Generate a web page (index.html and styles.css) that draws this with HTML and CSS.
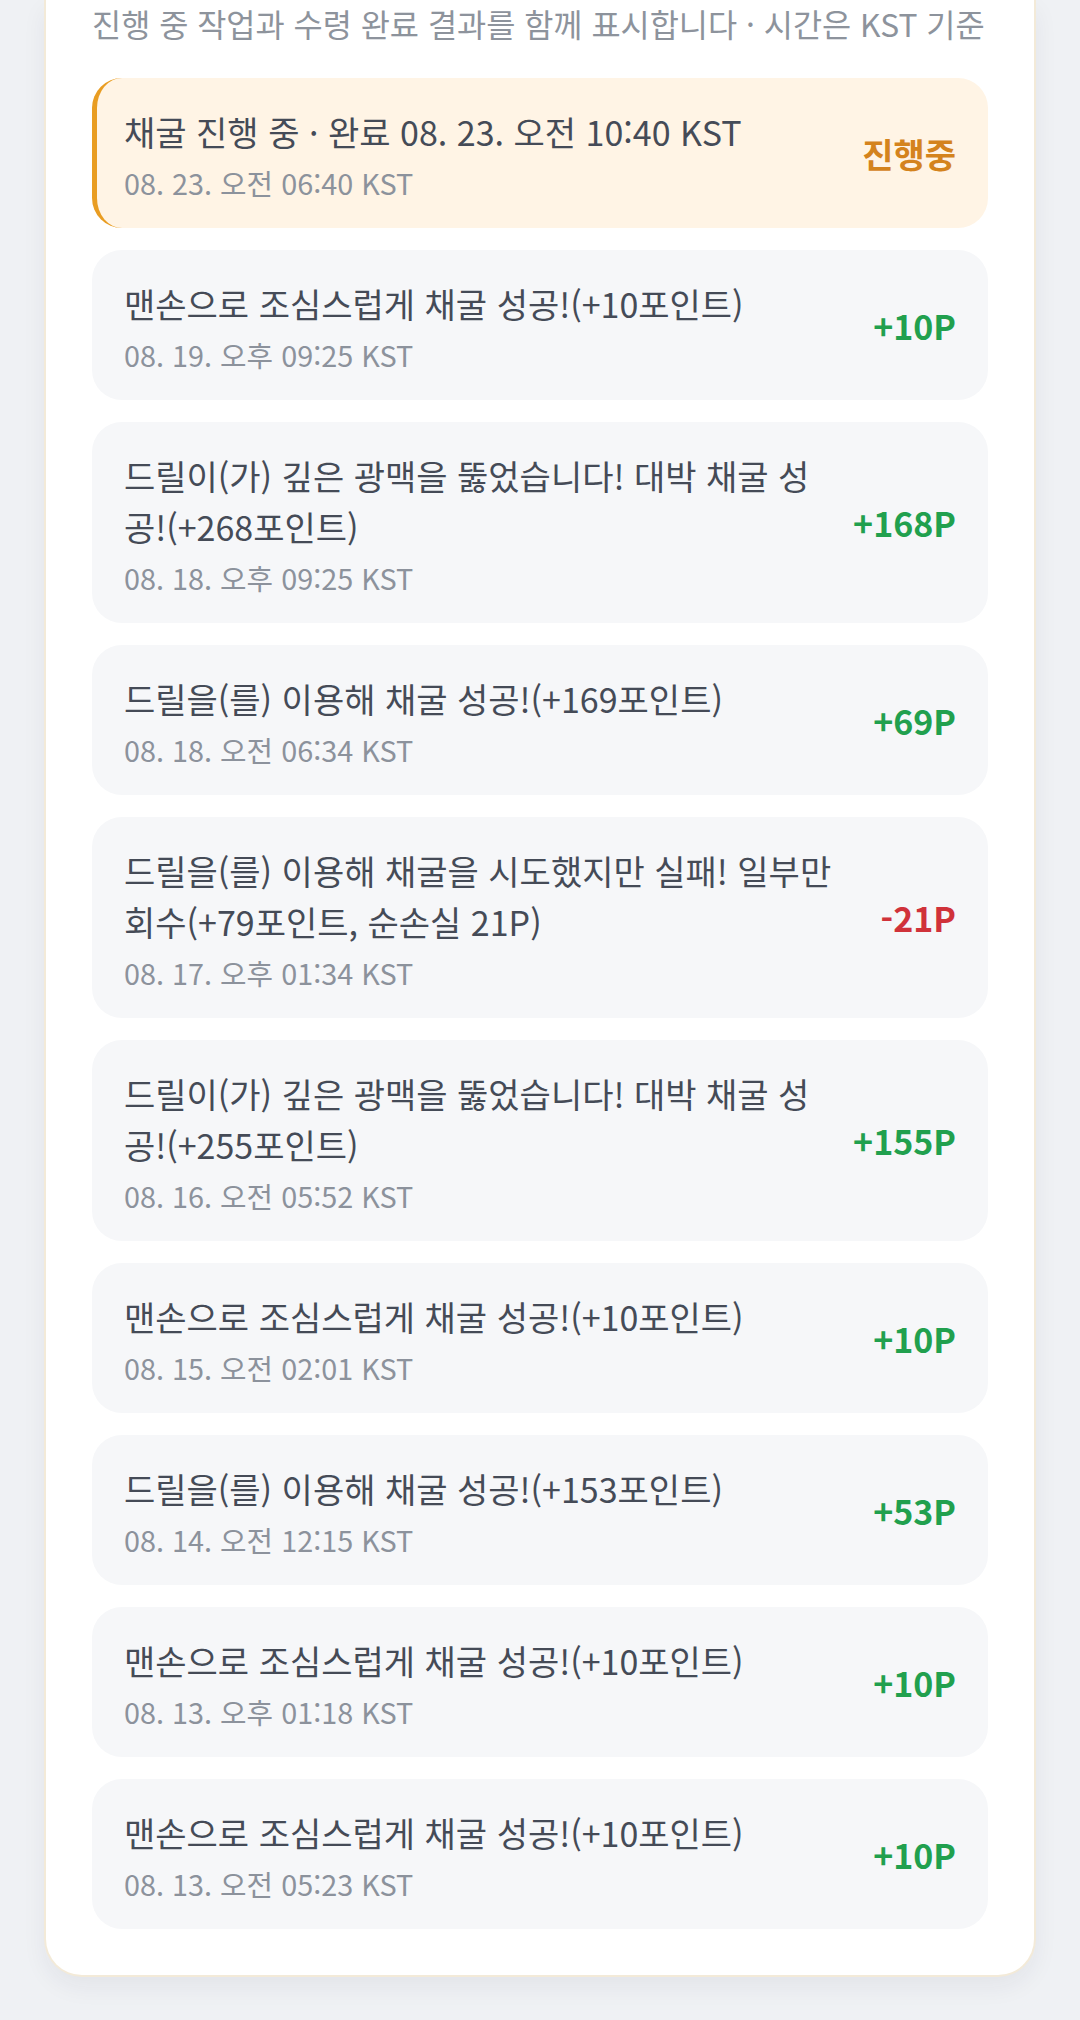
FILE: index.html
```html
<!DOCTYPE html>
<html lang="ko">
<head>
<meta charset="utf-8">
<title>채굴 기록</title>
<link rel="stylesheet" href="styles.css">
</head>
<body>
<div class="page">
  <section class="card">
    <p class="subtitle">진행 중 작업과 수령 완료 결과를 함께 표시합니다 · 시간은 KST 기준</p>
    <ul class="list">
      <li class="item item-active">
        <div class="info">
          <div class="title">채굴 진행 중 · 완료 08. 23. 오전 10:40 KST</div>
          <div class="date">08. 23. 오전 06:40 KST</div>
        </div>
        <div class="amount pending">진행중</div>
      </li>
      <li class="item">
        <div class="info">
          <div class="title">맨손으로 조심스럽게 채굴 성공!(+10포인트)</div>
          <div class="date">08. 19. 오후 09:25 KST</div>
        </div>
        <div class="amount plus">+10P</div>
      </li>
      <li class="item">
        <div class="info">
          <div class="title">드릴이(가) 깊은 광맥을 뚫었습니다! 대박 채굴 성공!(+268포인트)</div>
          <div class="date">08. 18. 오후 09:25 KST</div>
        </div>
        <div class="amount plus">+168P</div>
      </li>
      <li class="item">
        <div class="info">
          <div class="title">드릴을(를) 이용해 채굴 성공!(+169포인트)</div>
          <div class="date">08. 18. 오전 06:34 KST</div>
        </div>
        <div class="amount plus">+69P</div>
      </li>
      <li class="item">
        <div class="info">
          <div class="title">드릴을(를) 이용해 채굴을 시도했지만 실패! 일부만 회수(+79포인트, 순손실 21P)</div>
          <div class="date">08. 17. 오후 01:34 KST</div>
        </div>
        <div class="amount minus">-21P</div>
      </li>
      <li class="item">
        <div class="info">
          <div class="title">드릴이(가) 깊은 광맥을 뚫었습니다! 대박 채굴 성공!(+255포인트)</div>
          <div class="date">08. 16. 오전 05:52 KST</div>
        </div>
        <div class="amount plus">+155P</div>
      </li>
      <li class="item">
        <div class="info">
          <div class="title">맨손으로 조심스럽게 채굴 성공!(+10포인트)</div>
          <div class="date">08. 15. 오전 02:01 KST</div>
        </div>
        <div class="amount plus">+10P</div>
      </li>
      <li class="item">
        <div class="info">
          <div class="title">드릴을(를) 이용해 채굴 성공!(+153포인트)</div>
          <div class="date">08. 14. 오전 12:15 KST</div>
        </div>
        <div class="amount plus">+53P</div>
      </li>
      <li class="item">
        <div class="info">
          <div class="title">맨손으로 조심스럽게 채굴 성공!(+10포인트)</div>
          <div class="date">08. 13. 오후 01:18 KST</div>
        </div>
        <div class="amount plus">+10P</div>
      </li>
      <li class="item">
        <div class="info">
          <div class="title">맨손으로 조심스럽게 채굴 성공!(+10포인트)</div>
          <div class="date">08. 13. 오전 05:23 KST</div>
        </div>
        <div class="amount plus">+10P</div>
      </li>
    </ul>
  </section>
</div>
</body>
</html>
```
FILE: styles.css
```css
* { box-sizing: border-box; }
html, body {
  margin: 0;
  padding: 0;
  background: #eff1f4;
}
body {
  font-family: "Noto Sans CJK KR", "Noto Sans", sans-serif;
  color: #434955;
}
.page {
  padding: 0 44px 42px;
}
.card {
  background: #ffffff;
  border: 2px solid #f3ead8;
  border-top: none;
  border-radius: 0 0 38px 38px;
  padding: 0 46px 46px;
  box-shadow: 0 10px 24px rgba(30, 40, 60, 0.06);
}
.subtitle {
  margin: 0;
  padding-top: 3px;
  font-size: 31.7px;
  line-height: 40px;
  color: #8d939c;
  white-space: nowrap;
}
.list {
  list-style: none;
  margin: 35px 0 0;
  padding: 0;
  display: flex;
  flex-direction: column;
  gap: 22px;
}
.item {
  display: flex;
  align-items: center;
  gap: 12px;
  background: #f6f7f9;
  border-radius: 30px;
  padding: 28px 32px 27px;
}
.item-active {
  background: #fff4e5;
  border-left: 5px solid #e99d22;
  padding-left: 27px;
}
.info {
  flex: 1;
  min-width: 0;
  display: flex;
  flex-direction: column;
  gap: 7px;
}
.title {
  font-size: 34px;
  line-height: 51px;
  color: #454b57;
  word-break: break-all;
}
.date {
  font-size: 28.8px;
  line-height: 37px;
  color: #8c929c;
}
.amount {
  flex: none;
  min-width: 105px;
  text-align: right;
  font-size: 34px;
  font-weight: 700;
  line-height: 40px;
}
.plus { color: #21a04e; }
.minus { color: #d0323a; }
.pending { color: #d4831d; }
```
